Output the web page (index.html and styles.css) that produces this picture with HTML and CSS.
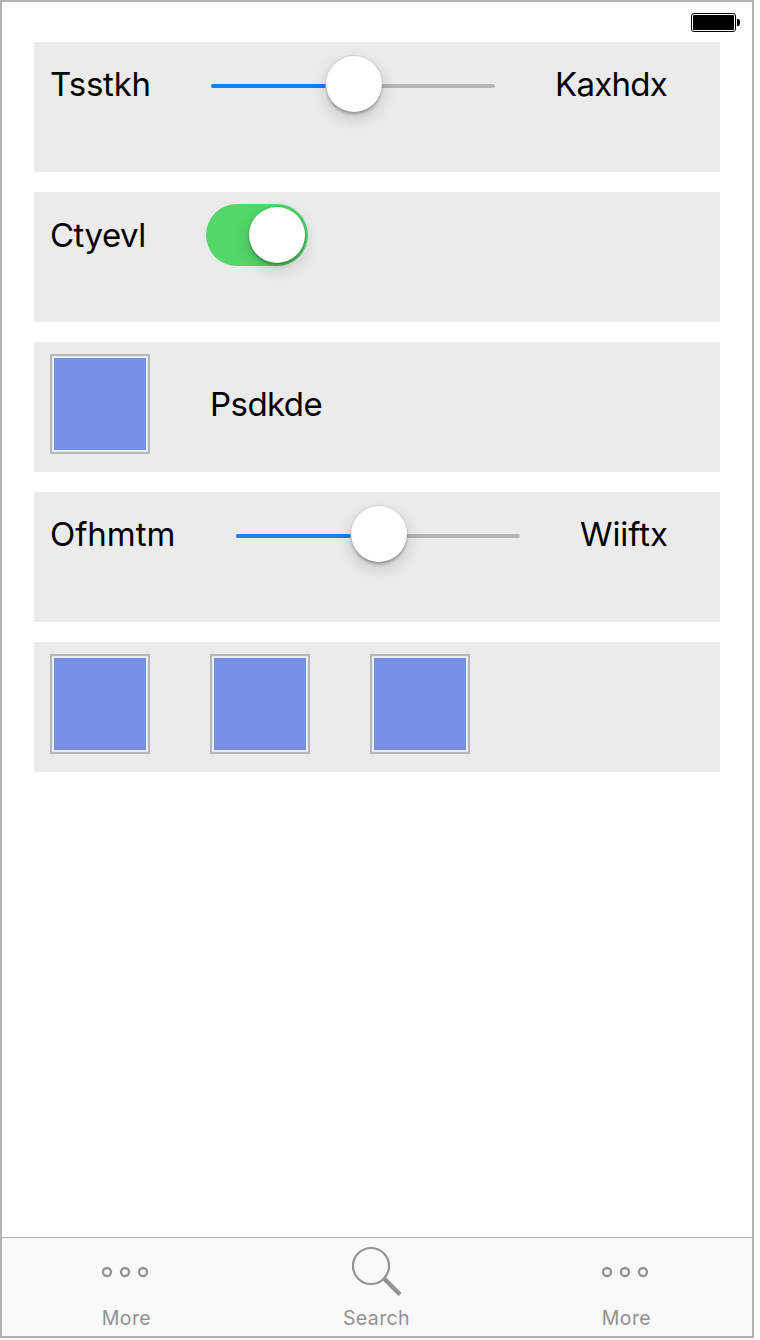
FILE: index.html
```html
<!DOCTYPE html>
<html lang="en">
<head>
<meta charset="utf-8">
<title>Controls</title>
<link rel="stylesheet" href="styles.css">
</head>
<body>
<div class="phone">
  <header class="status">
    <svg width="50" height="20" viewBox="0 0 50 20"><rect x="1.500" y="1.500" width="44" height="18" rx="2.500" fill="#fff" stroke="#000"/><rect x="3" y="3" width="41" height="15" rx="1" fill="#000"/><path d="M47 7h1c1.500 0 2 1.500 2 3.500s-.5 3.500-2 3.500h-1z" fill="#000"/></svg>
  </header>
  <main class="rows">
    <section class="row">
      <span class="label raised w-a">Tsstkh</span>
      <div class="slider"><div class="fill"></div><div class="knob"></div></div>
      <span class="label raised w-b">Kaxhdx</span>
    </section>
    <section class="row">
      <span class="label w-c">Ctyevl</span>
      <div class="switch"><div class="knob"></div></div>
    </section>
    <section class="row">
      <div class="swatch"></div>
      <span class="label tall w-d">Psdkde</span>
    </section>
    <section class="row">
      <span class="label raised w-e">Ofhmtm</span>
      <div class="slider"><div class="fill"></div><div class="knob"></div></div>
      <span class="label raised w-f">Wiiftx</span>
    </section>
    <section class="row">
      <div class="swatch"></div>
      <div class="swatch"></div>
      <div class="swatch"></div>
    </section>
  </main>
  <nav class="tabs">
    <div class="tab">
      <svg width="50" height="60" viewBox="0 0 50 60"><g fill="none" stroke="#929292" stroke-width="2.300"><circle cx="5" cy="34" r="4"/><circle cx="23" cy="34" r="4"/><circle cx="41" cy="34" r="4"/></g></svg>
      <span class="caption">More</span>
    </div>
    <div class="tab">
      <svg width="50" height="60" viewBox="0 0 50 60"><g fill="none" stroke="#929292"><circle cx="19" cy="28" r="18" stroke-width="2.200"/><path d="M32 40.500L48 56.500" stroke-width="4.400"/></g></svg>
      <span class="caption">Search</span>
    </div>
    <div class="tab">
      <svg width="50" height="60" viewBox="0 0 50 60"><g fill="none" stroke="#929292" stroke-width="2.300"><circle cx="5" cy="34" r="4"/><circle cx="23" cy="34" r="4"/><circle cx="41" cy="34" r="4"/></g></svg>
      <span class="caption">More</span>
    </div>
  </nav>
</div>
</body>
</html>
```

FILE: styles.css
```css
* { box-sizing: border-box; }
body { margin: 0; background: #fff; font-family: Inter, "Liberation Sans", sans-serif; }
.phone { width: 754px; height: 1338px; border: 2px solid #b2b2b2; display: flex; flex-direction: column; }
.status { height: 40px; padding: 10px 12px 0 0; display: flex; justify-content: flex-end; }
.rows { flex: 1; padding: 0 32px; display: flex; flex-direction: column; gap: 20px; }
.row { height: 130px; background: #ebebeb; padding: 12px 16px; display: flex; align-items: flex-start; gap: 60px; }
.label { font-size: 33px; line-height: 63px; color: #000; white-space: nowrap; }
.raised { line-height: 61px; }
.tall { line-height: 101px; }
.w-a { width: 101px; letter-spacing: -0.2px; }
.w-b { width: 113px; letter-spacing: -0.75px; }
.w-c { width: 96px; letter-spacing: -0.5px; }
.w-d { width: 114px; letter-spacing: -0.55px; }
.w-e { width: 126px; letter-spacing: -0.05px; }
.w-f { width: 88px; letter-spacing: -0.1px; }
.slider { width: 284px; height: 4px; margin-top: 30px; border-radius: 2px; background: #b5b5b5; display: flex; align-items: center; }
.fill { width: 114px; height: 4px; border-radius: 2px 0 0 2px; background: #147efb; }
.knob { width: 56px; height: 56px; flex: none; border-radius: 50%; background: #fff; box-shadow: 0 0 1px 1px rgba(0,0,0,.08), 0 3px 2px rgba(0,0,0,.18), 0 6px 16px rgba(0,0,0,.18); }
.slider .knob { margin: -4px 0 0 1px; }
.switch { width: 102px; height: 62px; padding: 3px; border-radius: 31px; background: #53d769; display: flex; justify-content: flex-end; }
.swatch { width: 100px; height: 100px; border: 2px solid #b5b5b5; padding: 2px; background: #758fe3; background-clip: content-box; box-shadow: inset 0 0 0 2px #e9edfa; }
.tabs { height: 99px; border-top: 1px solid #b2b2b2; background: #f9f9f9; display: grid; grid-template-columns: repeat(3, 250px); }
.tab { display: flex; flex-direction: column; align-items: center; }
.caption { font-size: 19.5px; line-height: 24px; margin: 8px 1px 0 0; letter-spacing: .4px; color: #929292; }
```
